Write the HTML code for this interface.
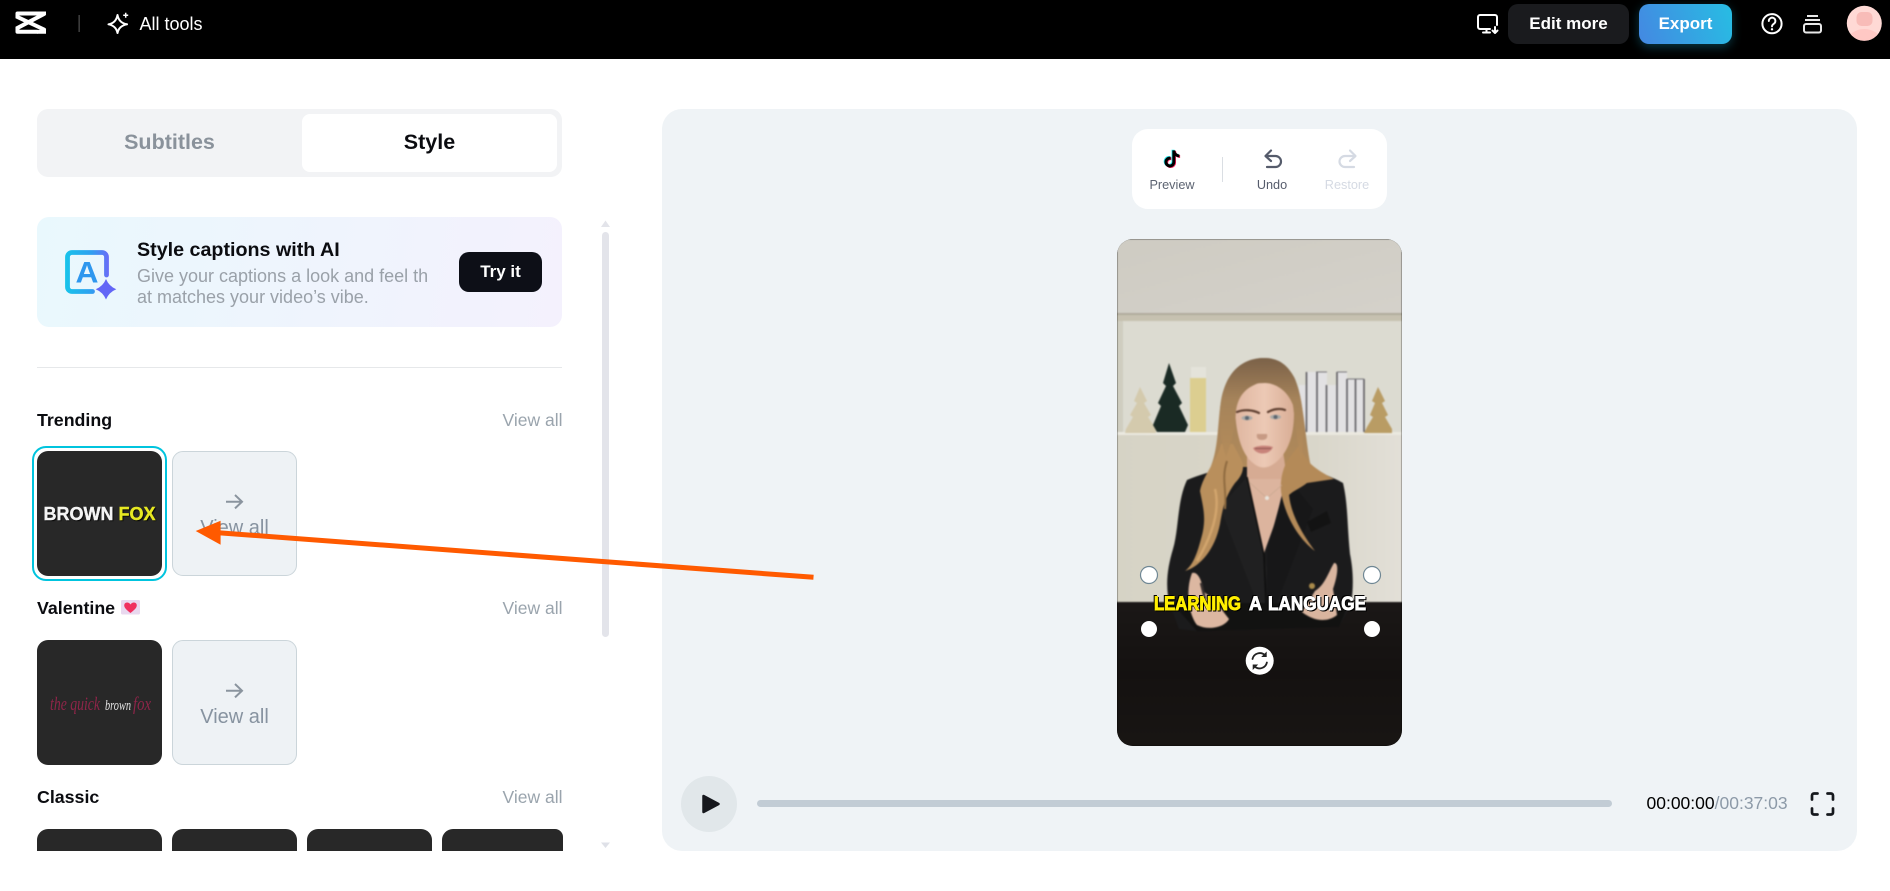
<!DOCTYPE html>
<html lang="en">
<head>
<meta charset="utf-8">
<title>Style captions</title>
<style>
html,body{margin:0;padding:0;background:#fff;width:1890px;height:891px;overflow:hidden}
body{position:relative;font-family:"Liberation Sans",Arial,sans-serif;color:#000}
.a{position:absolute;white-space:nowrap}
.b{font-weight:700}
.h{font-weight:700;font-size:17.8px;line-height:24px;left:37px;color:#0b0c10}
.va{font-size:17.5px;line-height:24px;right:1327.5px;color:#9aa4ad}
.card{position:absolute;width:125px;height:125px;background:#282828;border-radius:11px;overflow:hidden}
.cut{position:absolute;top:829px;height:22px;background:#282828;border-radius:11px 11px 0 0}
.more{position:absolute;width:125px;height:125px;box-sizing:border-box;background:#eef2f5;border:1px solid #cbd5da;border-radius:11px;color:#8793a0;font-size:20px;text-align:center}
.more span{position:absolute;left:0;right:0;top:63px;line-height:26px}
.tb{font-size:12.7px;line-height:16px;transform:translateX(-50%)}
</style>
</head>
<body>
<!-- header -->
<div class="a" style="left:0;top:0;width:1890px;height:59px;background:#000"></div>
<div class="a" style="left:139.5px;top:12px;line-height:24px;font-size:18px;color:#fff">All tools</div>
<div class="a b" style="left:1508px;top:4px;width:121px;height:40px;background:#1a1b1e;border-radius:10px;color:#fff;font-size:17px;line-height:40px;text-align:center">Edit more</div>
<div class="a b" style="left:1639px;top:4px;width:93px;height:40px;background:linear-gradient(70deg,#4488e2,#27bde3);border-radius:10px;color:#fff;font-size:17px;line-height:40px;text-align:center;box-shadow:0 3px 10px rgba(30,190,230,.3)">Export</div>

<!-- tabs -->
<div class="a" style="left:37px;top:109px;width:525px;height:68px;background:#f2f3f5;border-radius:11px"></div>
<div class="a" style="left:302px;top:114px;width:255px;height:58px;background:#fff;border-radius:8px"></div>
<div class="a b" style="left:37px;top:125px;width:265px;text-align:center;font-size:21.5px;line-height:34px;color:#8a929b">Subtitles</div>
<div class="a b" style="left:302px;top:125px;width:255px;text-align:center;font-size:21.5px;line-height:34px;color:#0b0c10">Style</div>

<!-- banner -->
<div class="a" style="left:37px;top:217px;width:525px;height:110px;background:linear-gradient(100deg,#e9f8fd,#f4f1fd);border-radius:12px"></div>
<div class="a b" style="left:137px;top:237px;font-size:19.7px;line-height:26px;color:#0b0c10">Style captions with AI</div>
<div class="a" style="left:137px;top:266px;font-size:18px;line-height:21px;color:#9aa1a9">Give your captions a look and feel th</div>
<div class="a" style="left:137px;top:287px;font-size:18px;line-height:21px;color:#9aa1a9">at matches your video’s vibe.</div>
<div class="a b" style="left:459px;top:252px;width:83px;height:40px;background:#0d0f17;border-radius:10px;color:#fff;font-size:17px;line-height:40px;text-align:center">Try it</div>

<div class="a" style="left:37px;top:367px;width:525px;height:1px;background:#e6e8ea"></div>

<!-- scrollbar -->
<div class="a" style="left:602px;top:232px;width:7px;height:405px;background:#e3e4ea;border-radius:4px"></div>

<!-- Trending -->
<div class="a h" style="top:408px">Trending</div>
<div class="a va" style="top:408px">View all</div>
<div class="a" style="left:32px;top:446px;width:135px;height:135px;box-sizing:border-box;border:2.5px solid #00c4de;border-radius:14px"></div>
<div class="card" style="left:37px;top:451px">
  <div class="a b" style="left:0;right:0;top:51px;line-height:24px;font-size:18px;text-align:center;color:#f4f4f4;-webkit-text-stroke:.4px currentColor;text-shadow:1px 1px 1px #000">BROWN <span style="color:#e6e822">FOX</span></div>
</div>
<div class="more" style="left:172px;top:451px"><span>View all</span></div>

<!-- Valentine -->
<div class="a h" style="top:596px">Valentine</div>
<div class="a va" style="top:596px">View all</div>
<div class="card" style="left:37px;top:640px">
  <svg width="125" height="125" viewBox="0 0 125 125" style="position:absolute;left:0;top:0">
    <g font-family="'Liberation Serif',serif" font-style="italic" style="filter:blur(.35px)">
      <text x="13" y="70" font-size="19" fill="#8f2549" textLength="50" lengthAdjust="spacingAndGlyphs">the quick</text>
      <text x="68" y="70" font-size="15" fill="#e4e4e4" textLength="26" lengthAdjust="spacingAndGlyphs">brown</text>
      <text x="96" y="70" font-size="19" fill="#8f2549" textLength="18" lengthAdjust="spacingAndGlyphs">fox</text>
    </g>
  </svg>
</div>
<div class="more" style="left:172px;top:640px"><span>View all</span></div>

<!-- Classic -->
<div class="a h" style="top:785px">Classic</div>
<div class="a va" style="top:785px">View all</div>
<div class="cut" style="left:37px;width:125px"></div>
<div class="cut" style="left:172px;width:125px"></div>
<div class="cut" style="left:307px;width:125px"></div>
<div class="cut" style="left:442px;width:120.7px;border-top-right-radius:8px"></div>

<!-- right panel -->
<div class="a" style="left:662px;top:109px;width:1195px;height:742px;background:#eff3f6;border-radius:20px"></div>
<div class="a" style="left:1132px;top:129px;width:255px;height:80px;background:#fff;border-radius:16px"></div>
<div class="a tb" style="left:1172px;top:177px;color:#5d6472">Preview</div>
<div class="a tb" style="left:1272px;top:177px;color:#565c6c">Undo</div>
<div class="a tb" style="left:1347px;top:177px;color:#d5dae3">Restore</div>
<div class="a" style="left:1222px;top:157px;width:1px;height:25px;background:#dadee3"></div>

<!-- video -->
<div class="a" style="left:1117px;top:239px;width:285px;height:507px;border-radius:16px;overflow:hidden;background:#000">
<svg width="285" height="507" viewBox="0 0 285 507" style="display:block">
  <defs>
    <linearGradient id="tbl" x1="0" y1="0" x2="0" y2="1"><stop offset="0" stop-color="#1a1716"/><stop offset=".5" stop-color="#141110"/><stop offset="1" stop-color="#181513"/></linearGradient>
    <linearGradient id="wall2" x1="0" y1="0" x2="1" y2="0"><stop offset="0" stop-color="#d6d3c5"/><stop offset=".7" stop-color="#d9d6ca"/><stop offset="1" stop-color="#e2dfd7"/></linearGradient>
    <linearGradient id="wall0" x1="0" y1="0" x2="1" y2="1"><stop offset="0" stop-color="#cecbc2"/><stop offset="1" stop-color="#d4d1ca"/></linearGradient>
    <linearGradient id="fc" x1="0" y1="0" x2="1" y2="0"><stop offset="0" stop-color="#dfb6a0"/><stop offset=".5" stop-color="#ecc9b5"/><stop offset="1" stop-color="#d9ad95"/></linearGradient>
    <linearGradient id="hr" x1="0" y1="0" x2="0" y2="1"><stop offset="0" stop-color="#7b6148"/><stop offset=".4" stop-color="#a5835a"/><stop offset="1" stop-color="#b58c5a"/></linearGradient>
  </defs>
  <g style="filter:blur(.9px)">
    <rect x="0" y="0" width="285" height="75" fill="url(#wall0)"/>
    <rect x="0" y="74" width="285" height="2" fill="#b0ab9c"/>
    <rect x="0" y="76" width="285" height="6" fill="#c6c1b0"/>
    <rect x="0" y="82" width="285" height="112" fill="#dcdbd1"/>
    <rect x="0" y="82" width="6" height="112" fill="#cfcdc0"/>
    <rect x="0" y="193" width="285" height="3" fill="#ebe9e0"/>
    <rect x="0" y="196" width="285" height="168" fill="url(#wall2)"/>
    <rect x="0" y="363" width="285" height="144" fill="url(#tbl)"/>
    <!-- decor -->
    <path d="M23 148 L30 162 L27 164 L34 176 L31 178 L39 190 L39 194 L8 194 L9 190 L16 178 L13 176 L20 164 L17 162 Z" fill="#d4caad"/>
    <path d="M52 124 L59 144 L56 147 L65 164 L62 167 L71 186 L68 193 L40 193 L36 186 L44 167 L41 164 L49 147 L46 144 Z" fill="#1a2a24"/>
    <rect x="74" y="128" width="15" height="12" fill="#e4e3da"/>
    <rect x="73" y="139" width="16" height="54" fill="#dcce90"/>
    <rect x="182" y="146" width="65" height="47" fill="#e2e1e3"/>
    <rect x="189" y="133" width="21" height="14" fill="#e2e1e3"/>
    <rect x="220" y="133" width="10" height="14" fill="#e2e1e3"/>
    <rect x="230" y="140" width="17" height="7" fill="#e2e1e3"/>
    <path d="M189.500 133 V193 M200 133 V193 M209.500 146 V193 M220 133 V193 M230 140 V193 M238.500 140 V193 M247 140 V193" stroke="#56555a" stroke-width="1.500"/>
    <path d="M199 133 H210 M220 133 H230 M230 140 H247" stroke="#77767a" stroke-width="1"/>
    <path d="M261 148 L268 162 L265 164 L271 176 L268 178 L275 190 L275 194 L247 194 L250 188 L256 178 L253 176 L258 164 L255 162 Z" fill="#b99c64"/>
    <!-- hair back -->
    <path d="M147 119 C122 119 108 137 104 162 C100 188 102 210 92 232 L80 250 L210 250 L195 232 C188 205 188 165 178 140 C170 124 160 119 147 119 Z" fill="url(#hr)"/>
    <!-- jacket -->
    <path d="M70 241 C60 262 62 290 56 310 C50 330 48 348 53 366 L62 390 L80 392 L222 388 L234 366 C237 346 236 330 233 315 C230 285 231 265 226 244 C212 236 198 232 186 228 L110 228 C96 232 82 236 70 241 Z" fill="#1b1b1c"/>
    <path d="M80 392 L222 388 L232 364 L55 364 Z" fill="#121211"/>
    <!-- skin -->
    <path d="M130 212 L130 240 L147 314 L170 240 L166 212 Z" fill="#d6ab93"/>
    <path d="M132 240 L147 314 L160 278 L168 240 Z" fill="#dcb49e"/>
    <!-- lapels -->
    <path d="M103 268 L130 238 L150 330 L148 364 L140 364 Z" fill="#202021"/>
    <path d="M196 270 L170 238 L150 312 L150 364 L160 364 Z" fill="#171718"/>
    <path d="M190 283 L210 272 L214 284 L194 293 Z" fill="#131313"/>
    <path d="M130 238 L147 316 L149 364" fill="none" stroke="#0d0d0d" stroke-width="1.500"/>
    <!-- hair front strands -->
    <path d="M104 205 C100 222 86 236 83 252 C86 268 90 280 84 300 C80 315 76 326 68 332 C84 327 98 310 103 285 C106 268 108 258 118 244 C126 236 128 228 124 220 L116 205 Z" fill="#b98f5c"/>
    <path d="M183 205 C186 222 198 230 217 240 L190 244 C182 250 176 252 172 256 C174 276 186 296 198 312 C182 300 170 280 165 258 C162 245 165 232 170 222 Z" fill="#b48a58"/>
    <path d="M98 250 C103 270 96 295 80 322" fill="none" stroke="#d2a56d" stroke-width="2.500"/>
    <path d="M110 222 C104 240 110 250 108 270" fill="none" stroke="#8f6b40" stroke-width="2"/>
    <!-- face -->
    <path d="M118 165 C118 150 130 144 148 144 C165 144 177 155 177 175 C177 198 170 215 158 224 C150 230 143 230 136 224 C124 215 118 192 118 165 Z" fill="url(#fc)"/>
    <path d="M147 119 C125 119 108 137 104 162 C101 182 103 200 109 218 C114 205 118 190 119 172 C121 156 130 148 142 144 C156 142 170 150 176 166 L180 198 L184 222 C188 195 188 162 177 138 C169 124 159 119 147 119 Z" fill="url(#hr)"/>
    <path d="M120 173 C127 170 136 171 142 174 M151 173 C156 170 163 169 168 171" stroke="#5e3f30" stroke-width="2.200" fill="none" stroke-linecap="round"/>
    <ellipse cx="130" cy="179" rx="5.500" ry="2.300" fill="#a9a9a6"/>
    <ellipse cx="158.500" cy="178" rx="5.500" ry="2.300" fill="#a9a9a6"/>
    <circle cx="130" cy="179" r="2" fill="#5c6670"/>
    <circle cx="158.500" cy="178" r="2" fill="#5c6670"/>
    <path d="M140 195 C139 199 141 201 145 201 C149 201 151 199 150 195" fill="#c79a84"/>
    <path d="M136 209 C141 206 151 206 156 208 C153 216 140 217 136 209 Z" fill="#c8837a"/>
    <path d="M138 209.500 H154" stroke="#8d5650" stroke-width="1"/>
    <!-- necklace -->
    <path d="M132 243 L150 259 L165 246" stroke="#c8a890" stroke-width=".7" fill="none"/>
    <circle cx="150" cy="259" r="2" fill="#e8e4dc"/>
    <!-- hands -->
    <path d="M75 334 C80 332 85 340 86 352 L98 362 L112 380 C108 388 92 392 80 386 C72 376 68 352 75 334 Z" fill="#dcb7a1"/>
    <path d="M217 324 C222 323 221 336 216 350 L220 376 C210 384 196 382 185 373 L198 352 C208 346 212 332 217 324 Z" fill="#d9b59f"/>
    <path d="M84 344 L88 360" stroke="#3a3230" stroke-width="2.500"/>
    <circle cx="195" cy="347" r="3" fill="#a98a4a"/>
  </g>
  <!-- caption -->
  <g font-family="'Liberation Sans',sans-serif" font-weight="700" font-size="19.500" stroke-width=".9" style="filter:drop-shadow(1.500px 1.500px 0 #000) drop-shadow(-.6px -.6px 0 #000)">
    <text x="37" y="371" fill="#ffee00" stroke="#ffee00" textLength="87" lengthAdjust="spacingAndGlyphs">LEARNING</text>
    <text x="132" y="371" fill="#fff" stroke="#fff" textLength="13" lengthAdjust="spacingAndGlyphs">A</text>
    <text x="151" y="371" fill="#fff" stroke="#fff" textLength="98" lengthAdjust="spacingAndGlyphs">LANGUAGE</text>
  </g>
  <!-- handles -->
  <g fill="#fff">
    <circle cx="32" cy="336" r="8.500" stroke="#6f8794" stroke-width="1.200"/>
    <circle cx="255" cy="336" r="8.500" stroke="#6f8794" stroke-width="1.200"/>
    <circle cx="32" cy="390" r="8"/>
    <circle cx="255" cy="390" r="8"/>
    <circle cx="142.700" cy="421.700" r="14"/>
  </g>
  <g fill="none" stroke="#222" stroke-width="1.800" stroke-linecap="round">
    <path d="M135.500 420 a7.500 7.500 0 0 1 12.500 -3.800"/>
    <path d="M149.900 423.500 a7.500 7.500 0 0 1 -12.500 3.800"/>
  </g>
  <path d="M149.700 412.500 V418 H144.200 Z M135.700 431 V425.500 H141.200 Z" fill="#222"/>
</svg>
</div>

<!-- player -->
<div class="a" style="left:681px;top:776px;width:56px;height:56px;border-radius:50%;background:#e1e7ea"></div>
<div class="a" style="left:757px;top:800px;width:855px;height:7px;border-radius:4px;background:#c2ccd5"></div>
<div class="a" style="left:1646.500px;top:791px;font-size:17.500px;line-height:24px;color:#000">00:00:00<span style="color:#8d9aa8">/00:37:03</span></div>

<!-- icons and annotation overlay -->
<svg class="a" style="left:0;top:0" width="1890" height="891" viewBox="0 0 1890 891" fill="none">
  <defs>
    <linearGradient id="ai" x1="65" y1="272" x2="109" y2="272" gradientUnits="userSpaceOnUse"><stop offset="0" stop-color="#18c4ea"/><stop offset=".6" stop-color="#2f9ff0"/><stop offset="1" stop-color="#6a6cf7"/></linearGradient>
    <clipPath id="av"><circle cx="1864.300" cy="23.300" r="17.500"/></clipPath>
  </defs>
  <!-- logo -->
  <g stroke="#fff" stroke-width="4" stroke-linecap="round">
    <path d="M17.500 13.500 H37"/>
    <path d="M17.500 31.800 H37"/>
    <path d="M17.500 14 V17 L44 29.500"/>
    <path d="M17.500 31 V28 L44 14"/>
  </g>
  <path d="M37 11.500 L46 11.500 L46 14.500 L38.500 15.500 Z M37 33.800 L46 33.800 L46 30 L38.500 29.800 Z" fill="#fff"/>
  <rect x="78.500" y="15" width="1.300" height="17" fill="#4a4a4a"/>
  <!-- sparkle -->
  <path d="M117.500 15 C118.500 20.500 121.500 23.500 127 24.300 C121.500 25.300 118.500 28 117.500 33 C116.500 28 113.500 25.300 108.500 24.300 C113.500 23.500 116.500 20.500 117.500 15 Z" stroke="#fff" stroke-width="2" stroke-linejoin="round"/>
  <path d="M125.700 12.800 V17.800 M123.200 15.300 H128.200" stroke="#fff" stroke-width="1.500"/>
  <!-- screen icon -->
  <g stroke="#fff" stroke-width="2" stroke-linecap="round" stroke-linejoin="round">
    <path d="M1497 25 V17 a2 2 0 0 0 -2 -2 H1480 a2 2 0 0 0 -2 2 V27 a2 2 0 0 0 2 2 H1490"/>
    <path d="M1483 32.500 H1490 M1486.500 29 V32.500"/>
    <path d="M1495 27 V33 M1492.500 30.500 L1495 33 L1497.500 30.500"/>
  </g>
  <!-- help -->
  <circle cx="1772" cy="23.700" r="9.600" stroke="#fff" stroke-width="2"/>
  <path d="M1768.800 21 a3.300 3.300 0 1 1 5 2.800 c-1.100 .7 -1.800 1.300 -1.800 2.600" stroke="#fff" stroke-width="1.900" stroke-linecap="round"/>
  <circle cx="1772" cy="29.300" r="1.200" fill="#fff"/>
  <!-- stack -->
  <g stroke="#e8e8e8" stroke-width="2">
    <path d="M1807 16 H1818 M1805 20 H1820"/>
    <rect x="1804" y="24" width="17" height="8.500" rx="2"/>
  </g>
  <!-- avatar -->
  <circle cx="1864.300" cy="23.300" r="17.500" fill="#ffd9d5"/>
  <g clip-path="url(#av)">
    <ellipse cx="1864.300" cy="42" rx="17" ry="13" fill="#ffc8c4"/>
    <rect x="1856.500" y="12" width="16" height="14" rx="5" fill="#f8bcb8"/>
  </g>
  <!-- A icon -->
  <path d="M92.500 291.500 H72 a4.500 4.500 0 0 1 -4.500 -4.500 V257 a4.500 4.500 0 0 1 4.500 -4.500 H102 a4.500 4.500 0 0 1 4.500 4.500 V275" stroke="url(#ai)" stroke-width="4.800" stroke-linecap="round"/>
  <text x="75.500" y="282.500" font-family="'Liberation Sans',sans-serif" font-weight="700" font-size="30" fill="#2e97ee" textLength="23" lengthAdjust="spacingAndGlyphs">A</text>
  <path d="M106 279 Q109 286.300 116.300 289.300 Q109 292.300 106 299.500 Q103 292.300 95.700 289.300 Q103 286.300 106 279 Z" fill="#6366f6"/>
  <!-- scroll arrows -->
  <path d="M605.500 220.500 L610 227 H601 Z" fill="#e3e4ea"/>
  <path d="M605.500 848 L610 842.500 H601 Z" fill="#dfe1e8"/>
  <!-- card arrows -->
  <g stroke="#8a949e" stroke-width="2">
    <path d="M226 501.700 H241.500 M235 495 L242 501.700 L235 508.400"/>
    <path d="M226 690.700 H241.500 M235 684 L242 690.700 L235 697.400"/>
  </g>
  <!-- emoji -->
  <rect x="121" y="600" width="19" height="14.500" rx="1.500" fill="#e9d8ef"/>
  <path d="M130.500 613 C125 609 123.500 606.500 124.500 604 C125.500 602 129 602 130.500 604.500 C132 602 135.500 602 136.500 604 C137.500 606.500 136 609 130.500 613 Z" fill="#f0305f"/>
  <!-- tiktok -->
  <g transform="translate(1160.500 147.500) scale(.95)">
    <path d="M16.600 5.820A4.280 4.280 0 0 1 15.540 3h-3.090v12.400a2.590 2.590 0 0 1-2.590 2.500c-1.420 0-2.600-1.160-2.600-2.600c0-1.720 1.660-3.010 3.370-2.480V9.660c-3.450-.46-6.470 2.220-6.470 5.640c0 3.330 2.760 5.700 5.690 5.700c3.140 0 5.690-2.550 5.690-5.700V9.010a7.350 7.350 0 0 0 4.300 1.380V7.300s-1.880.09-3.240-1.480z" fill="#22e3ea" transform="translate(-.8 -.6)"/>
    <path d="M16.600 5.820A4.280 4.280 0 0 1 15.540 3h-3.090v12.400a2.590 2.590 0 0 1-2.590 2.500c-1.420 0-2.600-1.160-2.600-2.600c0-1.720 1.660-3.010 3.370-2.480V9.660c-3.450-.46-6.470 2.220-6.470 5.640c0 3.330 2.760 5.700 5.690 5.700c3.140 0 5.690-2.550 5.690-5.700V9.010a7.350 7.350 0 0 0 4.300 1.380V7.300s-1.880.09-3.240-1.480z" fill="#f0225c" transform="translate(.8 .6)"/>
    <path d="M16.600 5.820A4.280 4.280 0 0 1 15.540 3h-3.090v12.400a2.590 2.590 0 0 1-2.590 2.500c-1.420 0-2.600-1.160-2.600-2.600c0-1.720 1.660-3.010 3.370-2.480V9.660c-3.450-.46-6.470 2.220-6.470 5.640c0 3.330 2.760 5.700 5.690 5.700c3.140 0 5.690-2.550 5.690-5.700V9.010a7.350 7.350 0 0 0 4.300 1.380V7.300s-1.880.09-3.240-1.480z" fill="#000"/>
  </g>
  <!-- undo / restore -->
  <g stroke="#555b6b" stroke-width="2.200" stroke-linecap="round" stroke-linejoin="round">
    <path d="M1266 156 H1275.500 a5.500 5.500 0 0 1 0 11 H1267"/>
    <path d="M1271 150.500 L1265.500 156 L1271 161"/>
  </g>
  <g stroke="#d5dae3" stroke-width="2.200" stroke-linecap="round" stroke-linejoin="round">
    <path d="M1355 156 H1345 a5.500 5.500 0 0 0 0 11 H1354"/>
    <path d="M1350 150.500 L1355.500 156 L1350 161"/>
  </g>
  <!-- play -->
  <path d="M703.500 796 L718.500 804 L703.500 812 Z" fill="#16181d" stroke="#16181d" stroke-width="2.500" stroke-linejoin="round"/>
  <!-- fullscreen -->
  <g stroke="#16181d" stroke-width="2.700" stroke-linecap="round" stroke-linejoin="round">
    <path d="M1812 799.500 V795.500 a2 2 0 0 1 2 -2 H1817.500"/>
    <path d="M1827.500 793.500 H1831 a2 2 0 0 1 2 2 V799.500"/>
    <path d="M1812 808.500 V812.500 a2 2 0 0 0 2 2 H1817.500"/>
    <path d="M1827.500 814.500 H1831 a2 2 0 0 0 2 -2 V808.500"/>
  </g>
  <!-- annotation arrow -->
  <path d="M215 532.500 L813.500 577.300" stroke="#ff5a00" stroke-width="5"/>
  <path d="M220.600 520.700 V544.700 L195.700 531 Z" fill="#ff5a00"/>
</svg>
</body>
</html>
